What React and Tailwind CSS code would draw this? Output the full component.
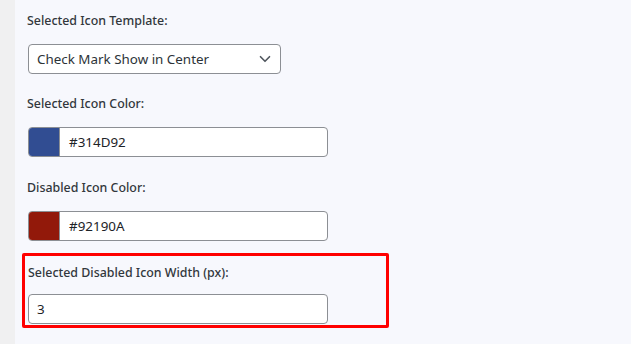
import { ChevronDown } from 'lucide-react';

const FONT = { fontFamily: '"Noto Sans", "Open Sans", sans-serif' };

function Label({ children }) {
  return <div className="text-[12.4px] leading-[18px] font-medium text-[#32373c] mb-[14px]">{children}</div>;
}

function ColorField({ color, value }) {
  return (
    <div className="flex w-[300px] h-[30px] border border-[#8c8f94] rounded-[4px] bg-white overflow-hidden">
      <div className="w-[31px] h-full border-r border-[#8c8f94]" style={{ background: color }} />
      <div className="flex items-center pl-[9px] text-[13.4px] text-[#1d2327]">{value}</div>
    </div>
  );
}

export default function App() {
  return (
    <div className="flex w-[631px] h-[344px] overflow-hidden" style={FONT}>
      <div className="w-[15px] bg-[#f0f0f1] shrink-0" />
      <div className="flex-1 bg-[#f7f8fd] pt-[12px]">
        <div className="pl-[12px]">
          <Label>Selected Icon Template:</Label>
          <div className="ml-[1px] flex items-center justify-between w-[253px] h-[30px] border border-[#8c8f94] rounded-[4px] bg-white pl-[8px] pr-[6px] text-[13.4px] text-[#2c3338]">
            <span>Check Mark Show in Center</span>
            <ChevronDown size={18} strokeWidth={2.2} className="text-[#50575e]" />
          </div>

          <div className="mt-[21px]">
            <Label>Selected Icon Color:</Label>
            <div className="ml-[1px]"><ColorField color="#314D92" value="#314D92" /></div>
          </div>

          <div className="mt-[22px]">
            <Label>Disabled Icon Color:</Label>
            <div className="ml-[1px]"><ColorField color="#92190A" value="#92190A" /></div>
          </div>
        </div>

        <div className="ml-[7px] mt-[12px] w-[367px] h-[75px] border-[3px] border-[#ff0000] rounded-[2px] pl-[3px] pt-[8px]">
          <Label>Selected Disabled Icon Width (px):</Label>
          <div className="-mt-[2px] w-[300px] h-[30px] border border-[#8c8f94] rounded-[4px] bg-white flex items-center pl-[8px] text-[13.4px] text-[#1d2327]">3</div>
        </div>
      </div>
    </div>
  );
}
